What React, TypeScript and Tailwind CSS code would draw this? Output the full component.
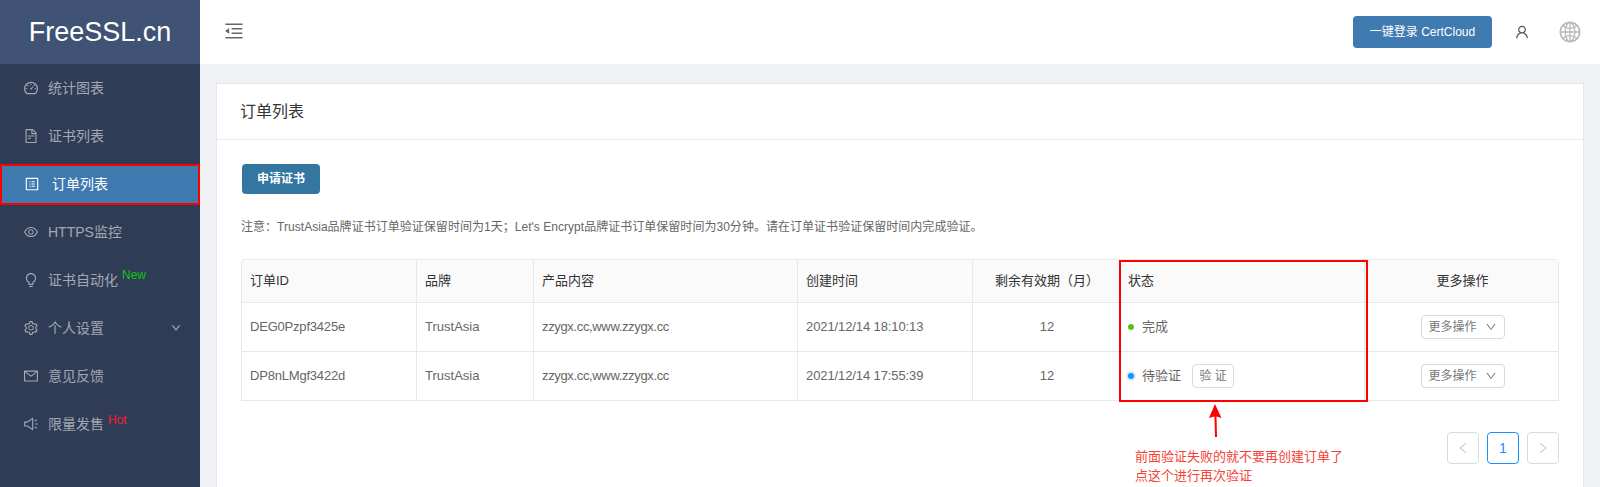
import React from 'react';
import {
  AiOutlineDashboard,
  AiOutlineFileText,
  AiOutlineProfile,
  AiOutlineEye,
  AiOutlineBulb,
  AiOutlineSetting,
  AiOutlineMail,
  AiOutlineSound,
  AiOutlineDown,
  AiOutlineUser,
  AiOutlineGlobal,
  AiOutlineMenuFold,
  AiOutlineLeft,
  AiOutlineRight,
} from 'react-icons/ai';

const font = "font-['Liberation_Sans','Noto_Sans_CJK_SC',sans-serif]";

const orders = [
  { id: 'DEG0Pzpf3425e', time: '2021/12/14 18:10:13', done: true },
  { id: 'DP8nLMgf3422d', time: '2021/12/14 17:55:39', done: false },
];

function MoreButton() {
  return (
    <button className="inline-flex h-6 w-[84px] items-center justify-center gap-2 rounded border border-[#d9d9d9] bg-white text-xs text-[#777]">
      更多操作
      <AiOutlineDown className="h-3 w-3" />
    </button>
  );
}

export default function App() {
  return (
    <div className={`flex h-[487px] w-[1600px] overflow-hidden bg-[#f0f2f5] ${font}`}>
      <aside className="w-[200px] shrink-0 bg-[#2f3c56]">
        <div className="flex h-16 items-center justify-center bg-[#405375] text-[27px] font-light text-white">FreeSSL.cn</div>
        <nav className="mt-1 flex flex-col gap-2 text-sm text-[#a3a8b3]">
          <a className="flex h-10 items-center gap-[9px] pl-[23px]"><AiOutlineDashboard className="h-4 w-4" />统计图表</a>
          <a className="flex h-10 items-center gap-[9px] pl-[23px]"><AiOutlineFileText className="h-4 w-4" />证书列表</a>
          <a className="-mb-px flex h-[41px] items-center gap-3 border-2 border-[#ff0000] bg-[#3e79b0] pb-[2px] pl-[22px] text-white"><AiOutlineProfile className="h-4 w-4" />订单列表</a>
          <a className="flex h-10 items-center gap-[9px] pl-[23px]"><AiOutlineEye className="h-4 w-4" />HTTPS监控</a>
          <a className="flex h-10 items-center gap-[9px] pl-[23px]">
            <AiOutlineBulb className="h-4 w-4" />
            <span>证书自动化<span className="relative -top-[6px] ml-1 text-xs text-[#11c511]">New</span></span>
          </a>
          <a className="flex h-10 items-center gap-[9px] pl-[23px] pr-[19px]">
            <AiOutlineSetting className="h-4 w-4" />
            个人设置
            <AiOutlineDown className="ml-auto h-[10px] w-[10px] stroke-current stroke-[60]" />
          </a>
          <a className="flex h-10 items-center gap-[9px] pl-[23px]"><AiOutlineMail className="h-4 w-4" />意见反馈</a>
          <a className="flex h-10 items-center gap-[9px] pl-[23px]">
            <AiOutlineSound className="h-4 w-4" />
            <span>限量发售<span className="relative -top-[5px] ml-1 text-xs text-[#ff1a2e]">Hot</span></span>
          </a>
        </nav>
      </aside>

      <div className="flex min-w-0 flex-1 flex-col">
        <header className="flex h-16 shrink-0 items-center bg-white pl-[23px] pr-[18px]">
          <AiOutlineMenuFold className="h-[22px] w-[22px] -translate-y-[1px] text-[#666]" />
          <button className="ml-auto h-8 w-[139px] rounded bg-[#3f7ab0] text-xs text-white">一键登录 CertCloud</button>
          <AiOutlineUser className="ml-[22px] h-4 w-4 text-[#555]" />
          <AiOutlineGlobal className="ml-[28px] h-6 w-6 text-[#bbb]" />
        </header>

        <main className="flex-1 pl-4 pr-4 pt-[19px]">
          <section className="border border-[#e8e8e8] bg-white">
            <div className="flex h-14 items-center border-b border-[#e8e8e8] pl-[23px] text-base text-[#333]">订单列表</div>
            <div className="relative px-6 pt-6">
              <button className="ml-px h-[30px] w-[78px] rounded bg-[#33769f] text-xs font-bold text-white">申请证书</button>
              <p className="mt-6 text-xs leading-[18px] tracking-[0.03px] text-[#666]">
                注意：TrustAsia品牌证书订单验证保留时间为1天；Let's Encrypt品牌证书订单保留时间为30分钟。请在订单证书验证保留时间内完成验证。
              </p>

              <table className="mt-[23px] w-[1318px] table-fixed border-separate border-spacing-0 overflow-hidden rounded-t border-l border-t border-[#e8e8e8] text-[13px] text-[#666]">
                <colgroup>
                  <col className="w-[175px]" />
                  <col className="w-[117px]" />
                  <col className="w-[264px]" />
                  <col className="w-[175px]" />
                  <col className="w-[147px]" />
                  <col className="w-[245px]" />
                  <col />
                </colgroup>
                <thead>
                  <tr className="h-[43px] bg-[#fafafa] text-left text-[#333]">
                    <th className="border-b border-r border-[#e8e8e8] px-2 font-normal">订单ID</th>
                    <th className="border-b border-r border-[#e8e8e8] px-2 font-normal">品牌</th>
                    <th className="border-b border-r border-[#e8e8e8] px-2 font-normal">产品内容</th>
                    <th className="border-b border-r border-[#e8e8e8] px-2 font-normal">创建时间</th>
                    <th className="border-b border-r border-[#e8e8e8] pl-[10px] pr-2 text-center font-normal">剩余有效期（月）</th>
                    <th className="border-b border-r border-[#e8e8e8] px-2 font-normal">状态</th>
                    <th className="border-b border-r border-[#e8e8e8] pl-[10px] pr-2 text-center font-normal">更多操作</th>
                  </tr>
                </thead>
                <tbody>
                  {orders.map((order) => (
                    <tr key={order.id} className="h-[49px]">
                      <td className="border-b border-r border-[#e8e8e8] px-2 tracking-[-0.2px]">{order.id}</td>
                      <td className="border-b border-r border-[#e8e8e8] px-2">TrustAsia</td>
                      <td className="border-b border-r border-[#e8e8e8] px-2 tracking-[-0.35px]">zzygx.cc,www.zzygx.cc</td>
                      <td className="border-b border-r border-[#e8e8e8] px-2 tracking-[-0.1px]">{order.time}</td>
                      <td className="border-b border-r border-[#e8e8e8] pl-[10px] pr-2 text-center">12</td>
                      <td className="border-b border-r border-[#e8e8e8] px-2">
                        {order.done ? (
                          <div className="flex items-center">
                            <span className="h-[6px] w-[6px] rounded-full bg-[#52c41a]" />
                            <span className="ml-[8px]">完成</span>
                          </div>
                        ) : (
                          <div className="flex items-center">
                            <span className="h-[6px] w-[6px] rounded-full bg-[#1890ff] shadow-[0_0_0_2px_#d9ecff]" />
                            <span className="ml-[8px]">待验证</span>
                            <button className="ml-[11px] h-6 w-[42px] rounded border border-[#d9d9d9] bg-white text-xs text-[#777]">验 证</button>
                          </div>
                        )}
                      </td>
                      <td className="border-b border-r border-[#e8e8e8] pl-[10px] pr-2 text-center"><MoreButton /></td>
                    </tr>
                  ))}
                </tbody>
              </table>

              <div className="mt-[31px] flex w-[1318px] justify-end gap-2 pb-6 text-sm">
                <span className="flex h-8 w-8 items-center justify-center rounded border border-[#d9d9d9] text-[#ccc]"><AiOutlineLeft className="h-[14px] w-[14px]" /></span>
                <span className="flex h-8 w-8 items-center justify-center rounded border border-[#1890ff] text-[#1890ff]">1</span>
                <span className="flex h-8 w-8 items-center justify-center rounded border border-[#d9d9d9] text-[#ccc]"><AiOutlineRight className="h-[14px] w-[14px]" /></span>
              </div>

              {/* annotation drawn over the screenshot */}
              <div className="pointer-events-none absolute left-[902px] top-[120px] h-[142px] w-[249px] border-2 border-[#ff0000]" />
              <svg className="absolute left-[990px] top-[264px]" width="16" height="34" viewBox="0 0 16 34">
                <path d="M8 0 L14.5 14 L9.5 12.5 L10 33 L8 33 L7.5 12.5 L2 14 Z" fill="#ff0000" />
              </svg>
              <div className="absolute left-[918px] top-[307px] text-[13px] leading-[19px] text-[#f44336]">
                前面验证失败的就不要再创建订单了
                <br />
                点这个进行再次验证
              </div>
            </div>
          </section>
        </main>
      </div>
    </div>
  );
}
